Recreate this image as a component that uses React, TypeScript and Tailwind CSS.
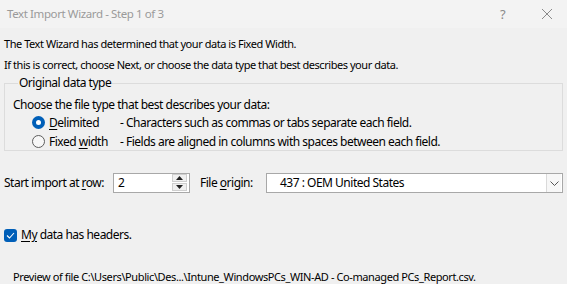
export default function App() {
  const font = "font-['Noto_Sans',sans-serif] text-[11px] tracking-[-0.45px]";
  const big = "text-[12px] tracking-[-0.5px]";
  return (
    <div className={`bg-[#f0f0f0] w-[567px] h-[284px] overflow-hidden text-black ${font}`}>
      {/* Title bar */}
      <div className="h-[28px] bg-[#f3f3f3] flex items-center pl-[7px]">
        <span className="text-[#9a9a9a] text-[11.5px] tracking-[-0.4px] flex-1">Text Import Wizard - Step 1 of 3</span>
        <span className="text-[#8a8a8a] text-[13px] w-[8px] mr-[33px] leading-none">?</span>
        <svg width="12" height="12" viewBox="0 0 12 12" className="mr-[14px]">
          <path d="M1 1 L11 11 M11 1 L1 11" stroke="#8a8a8a" strokeWidth="1" />
        </svg>
      </div>

      <div className="mt-[6px] h-[20px] flex items-center pl-[4px]">
        The Text Wizard has determined that your data is Fixed Width.
      </div>
      <div className="mt-[1px] h-[20px] flex items-center pl-[4px]">
        If this is correct, choose Next, or choose the data type that best describes your data.
      </div>

      <fieldset className={`mx-[4px] border border-[#dcdcdc] pl-[8px] h-[76px] ${big}`}>
        <legend className="ml-[5px] px-[1px] h-[16px] leading-[16px]">Original data type</legend>
        <div className="mt-[6px] h-[16px] flex items-center">Choose the file type that best describes your data:</div>
        <div className="h-[19px] flex items-center pl-[19px]">
          <span className="w-[13px] h-[13px] rounded-full bg-[#005fb8] flex items-center justify-center">
            <span className="w-[5px] h-[5px] rounded-full bg-white" />
          </span>
          <span className="ml-[4px] w-[71px]"><span className="underline underline-offset-2">D</span>elimited</span>
          <span>- Characters such as commas or tabs separate each field.</span>
        </div>
        <div className="h-[19px] flex items-center pl-[19px]">
          <span className="w-[13px] h-[13px] rounded-full border border-[#5d5d5d] bg-[#f7f7f7]" />
          <span className="ml-[4px] w-[71px]">Fixed <span className="underline underline-offset-2">w</span>idth</span>
          <span>- Fields are aligned in columns with spaces between each field.</span>
        </div>
      </fieldset>

      {/* Start import row */}
      <div className={`mt-[22px] h-[20px] flex items-center pl-[4px] ${big}`}>
        <span className="w-[109px]">Start import at <span className="underline underline-offset-2">r</span>ow:</span>
        <div className="w-[77px] h-[20px] border border-[#a8a8a8] bg-white flex items-center">
          <span className="flex-1 pl-[4px]">2</span>
          <div className="w-[15px] h-[17px] mr-[2px] flex flex-col gap-[1px] self-start">
            <div className="flex-1 bg-[#f0f0f0] border border-[#cfcfcf] flex items-center justify-center">
              <svg width="7" height="4" viewBox="0 0 7 4"><path d="M0 4 L3.5 0 L7 4 Z" fill="#222" /></svg>
            </div>
            <div className="flex-1 bg-[#f0f0f0] border border-[#cfcfcf] flex items-center justify-center">
              <svg width="7" height="4" viewBox="0 0 7 4"><path d="M0 0 L3.5 4 L7 0 Z" fill="#222" /></svg>
            </div>
          </div>
        </div>
        <span className="ml-[10px] w-[66px]">File <span className="underline underline-offset-2">o</span>rigin:</span>
        <div className="w-[297px] h-[20px] border border-[#a8a8a8] bg-white flex items-center">
          <span className="flex-1 pl-[13px]">437 : OEM United States</span>
          <div className="w-[15px] h-[18px] mr-[1px] bg-[#f7f7f7] border-l border-[#dadada] flex items-center justify-center">
            <svg width="9" height="5" viewBox="0 0 9 5"><path d="M0.5 0.5 L4.5 4.5 L8.5 0.5" stroke="#555" strokeWidth="1" fill="none" /></svg>
          </div>
        </div>
      </div>

      {/* checkbox */}
      <div className={`mt-[35px] h-[14px] flex items-center pl-[4px] ${big}`}>
        <span className="w-[13px] h-[13px] rounded-[3px] bg-[#005fb8] flex items-center justify-center">
          <svg width="9" height="7" viewBox="0 0 9 7"><path d="M1 3.5 L3.5 6 L8 1" stroke="white" strokeWidth="1.1" fill="none" /></svg>
        </span>
        <span className="ml-[4px]"><span className="underline underline-offset-2">My</span> data has headers.</span>
      </div>

      <div className="mt-[27px] h-[16px] flex items-center pl-[13px] tracking-[-0.4px]">
        Preview of file C:\Users\Public\Des...\Intune_WindowsPCs_WIN-AD - Co-managed PCs_Report.csv.
      </div>
    </div>
  );
}
